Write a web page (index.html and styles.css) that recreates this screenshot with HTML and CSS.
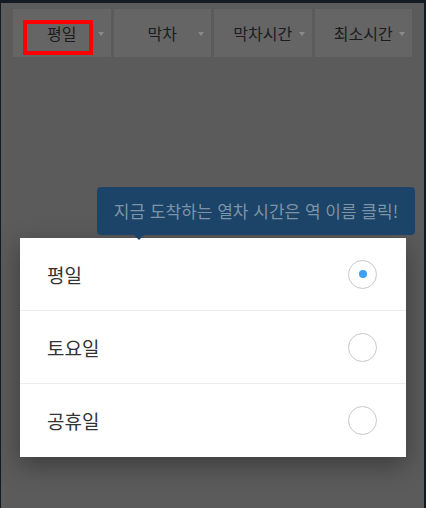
FILE: index.html
```html
<!DOCTYPE html>
<html lang="ko">
<head>
    <meta charset="UTF-8">
    <meta name="viewport" content="width=device-width, initial-scale=1.0">
    <title>막차 시간</title>
    <link rel="stylesheet" href="styles.css">
</head>
<body>
    <div class="screen">
        <div class="status-strip"></div>
        <nav class="tabs">
            <div class="tab tab-active"><span class="tab-label">평일</span><span class="caret"></span></div>
            <div class="tab"><span class="tab-label">막차</span><span class="caret"></span></div>
            <div class="tab"><span class="tab-label">막차시간</span><span class="caret"></span></div>
            <div class="tab"><span class="tab-label">최소시간</span><span class="caret"></span></div>
        </nav>
        <main class="content">
            <div class="tooltip">지금 도착하는 열차 시간은 역 이름 클릭!</div>
            <section class="dialog">
                <label class="option">
                    <span>평일</span>
                    <span class="radio radio-checked"></span>
                </label>
                <label class="option">
                    <span>토요일</span>
                    <span class="radio"></span>
                </label>
                <label class="option">
                    <span>공휴일</span>
                    <span class="radio"></span>
                </label>
            </section>
        </main>
    </div>
</body>
</html>
```

FILE: styles.css
```css
body {
    margin: 0;
    padding: 0;
    background: #141a22;
    font-family: "Noto Sans CJK KR", "Noto Sans", sans-serif;
}

.screen {
    width: 423px;
    height: 505px;
    margin: 3px 2px 0 1px;
    background: #5b5b5b;
    overflow: hidden;
}

.status-strip {
    height: 6px;
}

.tabs {
    display: flex;
    gap: 3px;
    margin-left: 12px;
    width: 399px;
}

.tab {
    position: relative;
    flex: 1;
    height: 48px;
    background: #656565;
    display: flex;
    align-items: center;
    justify-content: center;
}

.tab-label {
    font-size: 16px;
    color: #1c1c1c;
}

.tab-active::before {
    content: "";
    position: absolute;
    left: 10px;
    top: 11px;
    width: 62px;
    height: 27px;
    border: 4px solid #ff0000;
}

.caret {
    position: absolute;
    right: 7px;
    top: 23px;
    border-left: 3px solid transparent;
    border-right: 3px solid transparent;
    border-top: 4px solid #8a8a8a;
}

.content {
    padding: 130px 0 0 19px;
}

.tooltip {
    position: relative;
    margin-left: 77px;
    width: 318px;
    height: 48px;
    line-height: 48px;
    text-align: center;
    background: #1b4468;
    color: #7e93a6;
    font-size: 17px;
    border-radius: 4px;
}

.tooltip::after {
    content: "";
    position: absolute;
    left: 37px;
    bottom: -5px;
    border-left: 5px solid transparent;
    border-right: 5px solid transparent;
    border-top: 5px solid #1b4468;
}

.dialog {
    margin-top: 3px;
    width: 386px;
    background: #fff;
    box-shadow: 0 8px 24px rgba(0, 0, 0, 0.35);
}

.option {
    display: flex;
    align-items: center;
    justify-content: space-between;
    height: 72px;
    padding: 0 29px 0 27px;
    font-size: 19px;
    color: #333;
    border-bottom: 1px solid #ececec;
}

.option:last-child {
    border-bottom: none;
    height: 73px;
}

.radio {
    width: 27px;
    height: 27px;
    border: 1px solid #c8c8c8;
    border-radius: 50%;
    display: flex;
    align-items: center;
    justify-content: center;
}

.radio-checked::after {
    content: "";
    width: 8px;
    height: 8px;
    border-radius: 50%;
    background: #3d9ff5;
}
```
